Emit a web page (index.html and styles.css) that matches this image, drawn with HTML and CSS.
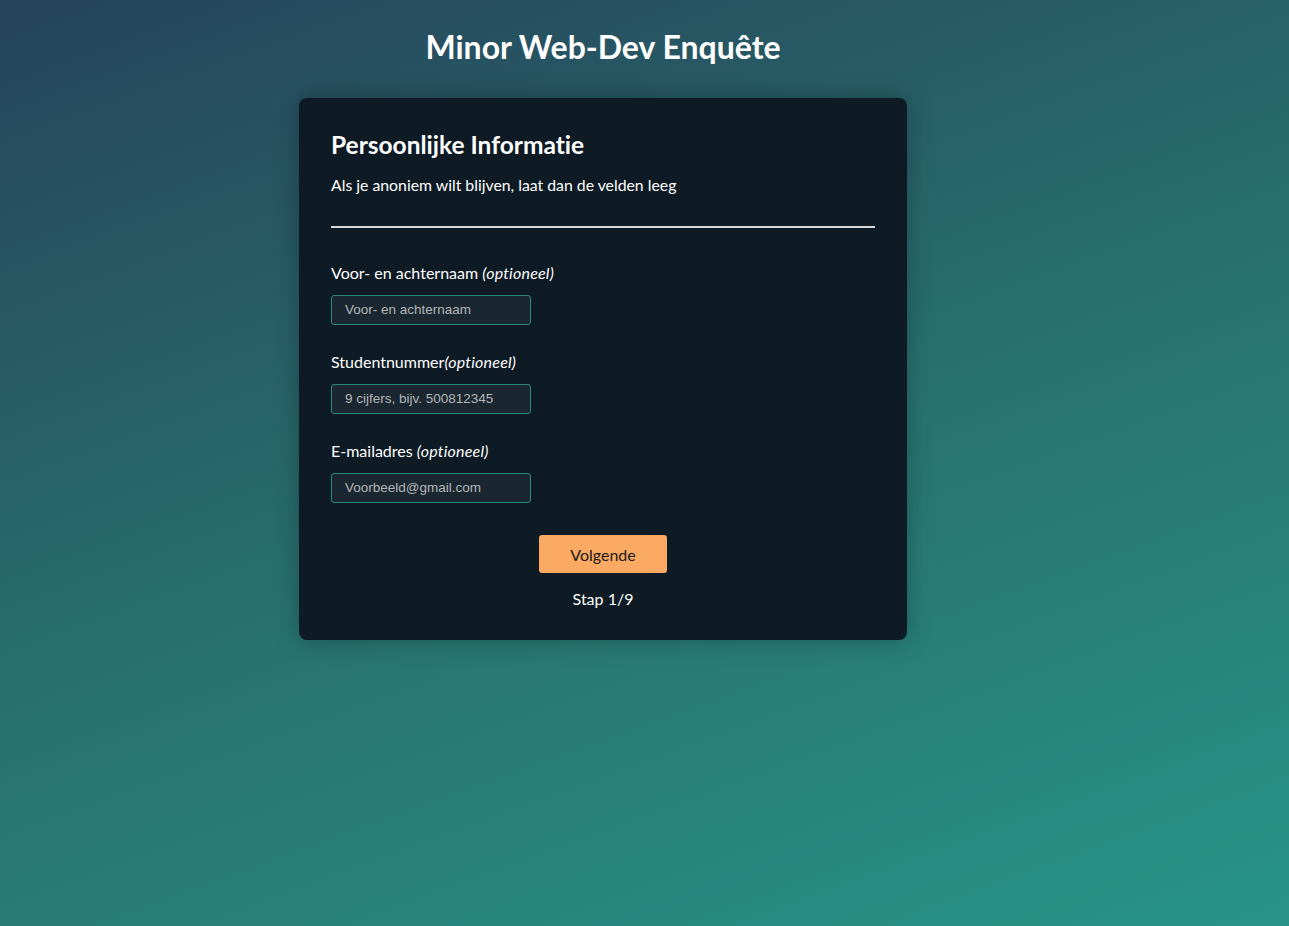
FILE: index.html
```html
<!DOCTYPE html>
<html lang="nl">
<head>
<meta charset="utf-8">
<title>Minor Web-Dev Enquête</title>
<link rel="stylesheet" href="styles.css">
</head>
<body>
<h1 class="page-title">Minor Web-Dev Enquête</h1>
<form class="card">
  <h2 class="card-title">Persoonlijke Informatie</h2>
  <p class="card-intro">Als je anoniem wilt blijven, laat dan de velden leeg</p>
  <hr class="divider">
  <div class="field">
    <label class="label" for="naam">Voor- en achternaam <em>(optioneel)</em></label>
    <input class="input" id="naam" type="text" placeholder="Voor- en achternaam">
  </div>
  <div class="field">
    <label class="label" for="nr">Studentnummer<em>(optioneel)</em></label>
    <input class="input" id="nr" type="text" placeholder="9 cijfers, bijv. 500812345">
  </div>
  <div class="field">
    <label class="label" for="mail">E-mailadres <em>(optioneel)</em></label>
    <input class="input" id="mail" type="email" placeholder="Voorbeeld@gmail.com">
  </div>
  <div class="actions">
    <button class="btn" type="button">Volgende</button>
    <span class="step">Stap 1/9</span>
  </div>
</form>
</body>
</html>
```
FILE: styles.css
```css
html, body {
  margin: 0;
  padding: 0;
}
body {
  min-height: 100vh;
  padding-right: 83px;
  background: linear-gradient(160deg, #26435a 0%, #28706f 50%, #289489 100%);
  font-family: Lato, "Open Sans", sans-serif;
  font-variant-ligatures: none;
  color: #ffffff;
  display: flex;
  flex-direction: column;
  align-items: center;
  box-sizing: border-box;
}
.page-title {
  margin: 28px 0 32px;
  font-size: 32px;
  line-height: 38px;
  font-weight: 700;
  text-align: center;
}
.card {
  width: 608px;
  box-sizing: border-box;
  padding: 32px 32px 31px;
  background: #0e1a24;
  border-radius: 8px;
  box-shadow: 0 0 24px rgba(0, 0, 0, 0.28);
  display: flex;
  flex-direction: column;
}
.card-title {
  margin: 0;
  font-size: 24.5px;
  line-height: 30px;
  font-weight: 700;
}
.card-intro {
  margin: 15px 0 0;
  font-size: 15.8px;
  line-height: 20px;
}
.divider {
  margin: 31px 0 0;
  border: 0;
  height: 2px;
  background: #d8d8d8;
}
.field {
  display: flex;
  flex-direction: column;
  align-items: flex-start;
  margin-top: 27px;
}
.divider + .field {
  margin-top: 35px;
}
.label {
  font-size: 16px;
  line-height: 20px;
  margin-bottom: 12px;
}
.label em {
  font-style: italic;
  letter-spacing: 0.2px;
}
.input {
  width: 200px;
  height: 30px;
  box-sizing: border-box;
  padding: 0 13px 2px;
  background: #1b2730;
  border: 1px solid #2a8a7c;
  border-radius: 3px;
  color: #ddd;
  font-family: "Liberation Sans", Arial, sans-serif;
  font-size: 13.5px;
  outline: none;
}
.input::placeholder {
  color: #b3b6b8;
}
.actions {
  margin-top: 32px;
  display: flex;
  flex-direction: column;
  align-items: center;
  gap: 16px;
}
.btn {
  width: 128px;
  height: 38px;
  border: 0;
  border-radius: 3px;
  background: #fbaa63;
  color: #1a1a1a;
  font-family: Lato, sans-serif;
  font-size: 16px;
  cursor: pointer;
}
.step {
  font-size: 16px;
  line-height: 20px;
}
```
